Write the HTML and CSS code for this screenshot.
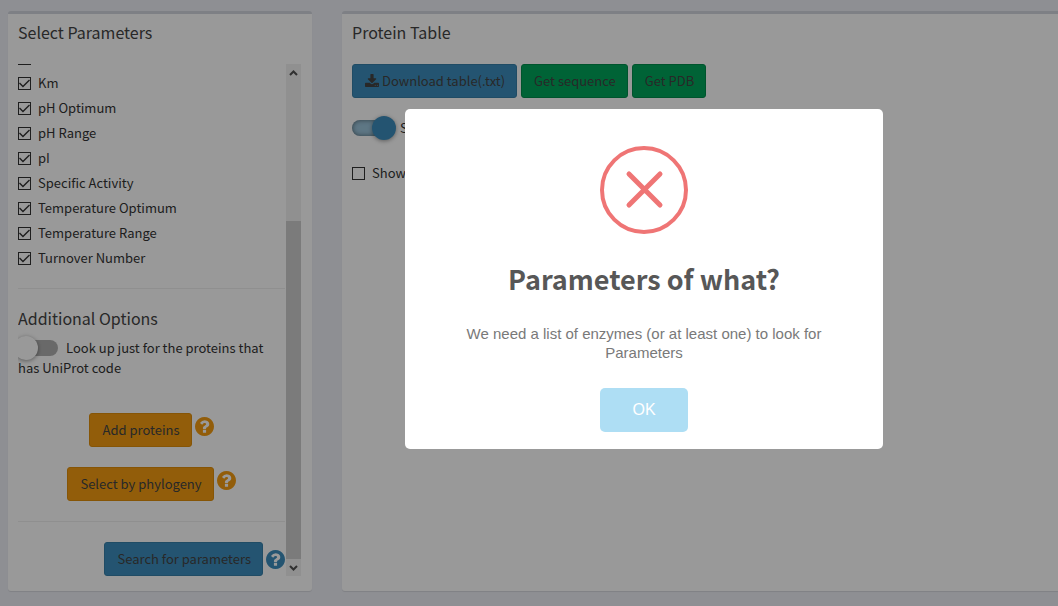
FILE: index.html
```html
<!DOCTYPE html>
<html lang="en">
<head>
<meta charset="utf-8">
<title>Protein parameters</title>
<link rel="stylesheet" href="styles.css">
</head>
<body>
<svg class="sprite" aria-hidden="true">
  <symbol id="question" viewBox="128 128 1536 1536"><path d="M1024 1376v-192q0-14-9-23t-23-9h-192q-14 0-23 9t-9 23v192q0 14 9 23t23 9h192q14 0 23-9t9-23zm256-672q0-88-55.500-163t-138.500-116-170-41q-243 0-371 213-15 24 8 42l132 100q7 6 19 6 16 0 25-12 53-68 86-92 34-24 86-24 48 0 85.500 26t37.500 59q0 38-20 61t-68 45q-63 28-115.500 86.500t-52.500 125.500v36q0 14 9 23t23 9h192q14 0 23-9t9-23q0-19 21.500-49.500t54.500-49.500q32-18 49-28.500t46-35 44.500-48 28-60.500 12.500-81zm384 192q0 209-103 385.500t-279.500 279.500-385.500 103-385.500-103-279.500-279.500-103-385.500 103-385.500 279.500-279.500 385.500-103 385.500 103 279.500 279.500 103 385.500z"/></symbol>
  <symbol id="download" viewBox="0 -128 1664 1536"><path d="M1280 1216q0-26-19-45t-45-19-45 19-19 45 19 45 45 19 45-19 19-45zM1536 1216q0-26-19-45t-45-19-45 19-19 45 19 45 45 19 45-19 19-45zM1664 992v320q0 40-28 68t-68 28h-1472q-40 0-68-28t-28-68v-320q0-40 28-68t68-28h465l135 136q58 56 136 56t136-56l136-136h464q40 0 68 28t28 68zM1339 423q17 41-14 70l-448 448q-18 19-45 19t-45-19l-448-448q-31-29-14-70 17-39 59-39h256v-448q0-26 19-45t45-19h256q26 0 45 19t19 45v448h256q42 0 59 39z"/></symbol>
</svg>

<main class="layout">
  <section class="box">
    <h2 class="box-title">Select Parameters</h2>
    <div class="scroller">
      <div class="panel">
        <div class="checks">
          <label class="check"><input type="checkbox" checked aria-label="Parameter"></label>
          <label class="check"><input type="checkbox" checked>Km</label>
          <label class="check"><input type="checkbox" checked>pH Optimum</label>
          <label class="check"><input type="checkbox" checked>pH Range</label>
          <label class="check"><input type="checkbox" checked>pI</label>
          <label class="check"><input type="checkbox" checked>Specific Activity</label>
          <label class="check"><input type="checkbox" checked>Temperature Optimum</label>
          <label class="check"><input type="checkbox" checked>Temperature Range</label>
          <label class="check"><input type="checkbox" checked>Turnover Number</label>
        </div>
        <hr class="rule">
        <h2 class="subtitle">Additional Options</h2>
        <label class="option"><input type="checkbox" class="switch">Look up just for the proteins that has UniProt code</label>
        <div class="actions">
          <div class="action">
            <button type="button" class="btn btn-warning">Add proteins</button>
            <button type="button" class="help help-warning" aria-label="Help"><svg><use href="#question"/></svg></button>
          </div>
          <div class="action">
            <button type="button" class="btn btn-warning">Select by phylogeny</button>
            <button type="button" class="help help-warning" aria-label="Help"><svg><use href="#question"/></svg></button>
          </div>
        </div>
        <hr class="rule">
        <div class="action action-end">
          <button type="button" class="btn btn-primary">Search for parameters</button>
          <button type="button" class="help help-primary" aria-label="Help"><svg><use href="#question"/></svg></button>
        </div>
      </div>
      <div class="scrollbar" aria-hidden="true">
        <svg class="arrow" viewBox="0 0 15 17"><path d="M4 11l3.500-3.500L11 11"/></svg>
        <div class="thumb"></div>
        <svg class="arrow" viewBox="0 0 15 17"><path d="M4 7l3.500 3.500L11 7"/></svg>
      </div>
    </div>
  </section>

  <section class="box box-main">
    <h2 class="box-title">Protein Table</h2>
    <div class="toolbar">
      <button type="button" class="btn btn-primary"><svg class="download"><use href="#download"/></svg>Download table(.txt)</button>
      <button type="button" class="btn btn-success">Get sequence</button>
      <button type="button" class="btn btn-success">Get PDB</button>
    </div>
    <label class="toggle-row"><input type="checkbox" class="switch" checked>S</label>
    <label class="check"><input type="checkbox">Show</label>
  </section>
</main>

<div class="overlay">
  <div class="dialog" role="alertdialog" aria-modal="true" aria-labelledby="dialog-title" aria-describedby="dialog-text">
    <svg class="error-icon" viewBox="0 0 88 88" aria-hidden="true"><circle cx="44" cy="44" r="42"/><path d="M29 28l31 31M60 28L29 59"/></svg>
    <h2 class="dialog-title" id="dialog-title">Parameters of what?</h2>
    <p class="dialog-text" id="dialog-text">We need a list of enzymes (or at least one) to look for Parameters</p>
    <button type="button" class="ok">OK</button>
  </div>
</div>
</body>
</html>
```

FILE: styles.css
```css
* { box-sizing: border-box; }

body {
  margin: 0;
  background: #edeff6;
  color: #333;
  font: 13px/20px "Noto Sans CJK SC", "Noto Sans", sans-serif;
}

.sprite { position: absolute; width: 0; height: 0; }

.layout {
  display: grid;
  grid-template-columns: 304px 1fr;
  gap: 30px;
  min-height: 100vh;
  padding: 11px 0 15px 8px;
}

.box {
  display: flex;
  flex-direction: column;
  padding: 8px 10px 15px;
  border-top: 3px solid #d2d6de;
  border-radius: 3px;
  background: #fff;
  box-shadow: 0 1px 1px rgba(0, 0, 0, .1);
}
.box-main { border-top-right-radius: 0; border-bottom-right-radius: 0; }

.box-title, .subtitle {
  margin: 0;
  color: #444;
  font-size: 16px;
  font-weight: 400;
  line-height: 20px;
}
.box-title { margin-bottom: 22px; }
.subtitle { margin: -1px 0 10px; }

.scroller { display: flex; }

/* Scrolled to its end: the rows above are cut off at the top edge. */
.panel {
  display: flex;
  flex: 1;
  flex-direction: column;
  justify-content: flex-end;
  height: 512px;
  padding-right: 1px;
  overflow: hidden;
}
.panel > * { flex-shrink: 0; }

.checks { display: flex; flex-direction: column; gap: 5px; }
.check { display: flex; align-items: center; gap: 7px; height: 20px; }
.check input {
  position: relative;
  width: 13px;
  height: 13px;
  margin: 1px 0 0;
  appearance: none;
  border: 1px solid #333;
}
.check input:checked::after {
  content: "";
  position: absolute;
  inset: 0;
  background: #333;
  clip-path: polygon(0 50%, 9% 41%, 36% 68%, 91% 14%, 100% 23%, 36% 86%);
}

.rule { width: 100%; margin: 20px 0; border: 0; border-top: 1px solid #eee; }

.option { height: 40px; }

.switch {
  position: relative;
  width: 40px;
  height: 16px;
  margin: 0 8px 2px 0;
  appearance: none;
  border-radius: 8px;
  background: #b0b0b0;
  vertical-align: middle;
}
.switch::after {
  content: "";
  position: absolute;
  top: -4px;
  left: -4px;
  width: 24px;
  height: 24px;
  border-radius: 50%;
  background: #fff;
  box-shadow: 0 1px 4px rgba(0, 0, 0, .4);
}
.switch:checked { background: #9dc6dd; box-shadow: inset 0 0 5px rgba(0, 0, 0, .5); }
.switch:checked::after { left: 20px; background: #3c8dbc; }

.actions {
  display: flex;
  flex-direction: column;
  gap: 20px;
  margin-top: 35px;
}
.action { display: flex; justify-content: center; gap: 3px; }
.action-end { justify-content: flex-end; }

.btn {
  height: 34px;
  padding: 0 11px 0 12px;
  border: 1px solid;
  border-radius: 3px;
  color: #444;
  font: inherit;
  white-space: nowrap;
}
.btn-warning { background: #f39c12; border-color: #e08e0b; }
.btn-primary { background: #3c8dbc; border-color: #367fa9; }
.btn-success { background: #00a65a; border-color: #008d4c; }

.help { width: 19px; height: 19px; margin-top: 4px; padding: 0; border: 0; background: none; }
.help svg { display: block; width: 19px; height: 19px; fill: currentColor; }
.help-warning { color: #f39c12; }
.help-primary { color: #3c8dbc; }
.action-end .help { margin-top: 8px; }

.scrollbar { display: flex; flex-direction: column; width: 15px; margin-right: 1px; background: #f0f0f0; }
.thumb { flex: 1; margin-top: 140px; background: #cdcdcd; }
.arrow { height: 17px; fill: none; stroke: #505050; stroke-width: 2; }

.toolbar { display: flex; gap: 4px; }
.download { width: 14px; height: 13px; margin-right: 3px; fill: currentColor; vertical-align: -1px; }
.toggle-row { margin: 20px 0 25px; }

.overlay {
  position: fixed;
  inset: 0;
  display: flex;
  align-items: center;
  justify-content: center;
  padding: 0 0 48px 230px;
  background: rgba(0, 0, 0, .4);
}
.dialog {
  display: flex;
  flex-direction: column;
  align-items: center;
  width: 478px;
  padding: 37px 17px 17px;
  border-radius: 5px;
  background: #fff;
  text-align: center;
}
.error-icon { width: 88px; height: 88px; fill: none; stroke: #ef7575; stroke-width: 4; }
.error-icon path { stroke-width: 5; stroke-linecap: round; }
.dialog-title {
  margin: 25px 0;
  color: #575757;
  font-size: 27px;
  font-weight: 700;
  line-height: 40px;
}
.dialog-text {
  width: 376px;
  margin: 0 0 26px;
  color: #797979;
  font: 15px/19px "Liberation Sans", Arial, sans-serif;
}
.ok {
  height: 44px;
  padding: 0 32px;
  border: 0;
  border-radius: 5px;
  background: #aedef4;
  color: #fff;
  font: 16px/20px "Liberation Sans", Arial, sans-serif;
}
```
